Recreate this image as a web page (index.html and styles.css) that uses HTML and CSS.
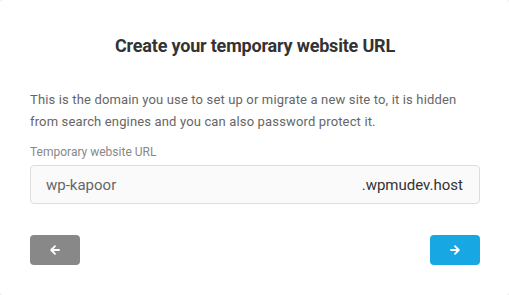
FILE: index.html
```html
<!DOCTYPE html>
<html>
<head>
<meta charset="utf-8">
<link rel="stylesheet" href="styles.css">
</head>
<body>
<div class="card">
  <h1 class="title">Create your temporary website URL</h1>
  <p class="desc">This is the domain you use to set up or migrate a new site to, it is hidden from search engines and you can also password protect it.</p>
  <label class="label">Temporary website URL</label>
  <div class="field">
    <span class="value">wp-kapoor</span>
    <span class="suffix">.wpmudev.host</span>
  </div>
  <div class="actions">
    <button class="btn btn-back" aria-label="Back">
      <svg width="12" height="12" viewBox="0 0 12 12"><path d="M10 6H2.5M6 2.2L2.2 6 6 9.8" fill="none" stroke="#fff" stroke-width="1.8" stroke-linecap="round" stroke-linejoin="round"/></svg>
    </button>
    <button class="btn btn-next" aria-label="Next">
      <svg width="12" height="12" viewBox="0 0 12 12"><path d="M2 6h7.5M6 2.2L9.8 6 6 9.8" fill="none" stroke="#fff" stroke-width="1.8" stroke-linecap="round" stroke-linejoin="round"/></svg>
    </button>
  </div>
</div>
</body>
</html>
```
FILE: styles.css
```css
html, body {
  margin: 0;
  padding: 0;
  background: #f0f0f0;
}
body {
  font-family: Roboto, "Liberation Sans", sans-serif;
}
.card {
  width: 509px;
  height: 295px;
  box-sizing: border-box;
  background: #fff;
  border-radius: 4px;
  padding: 34px 29px 0 30px;
}
.title {
  margin: 0;
  font-size: 18px;
  line-height: 24px;
  font-weight: 700;
  letter-spacing: -0.2px;
  color: #333;
  text-align: center;
}
.desc {
  margin: 31px 0 0;
  font-size: 13px;
  line-height: 22px;
  letter-spacing: 0.15px;
  color: #666;
}
.label {
  display: block;
  margin-top: 11px;
  font-size: 12px;
  line-height: 16px;
  color: #888;
}
.field {
  margin-top: 5px;
  height: 39px;
  box-sizing: border-box;
  border: 1px solid #ddd;
  border-radius: 4px;
  background: #fafafa;
  display: flex;
  align-items: center;
  justify-content: space-between;
  padding: 0 16px 0 15px;
  font-size: 15px;
}
.value {
  color: #666;
}
.suffix {
  color: #333;
}
.actions {
  margin-top: 31px;
  display: flex;
  justify-content: space-between;
}
.btn {
  width: 50px;
  height: 30px;
  border: none;
  border-radius: 4px;
  padding: 0;
  display: flex;
  align-items: center;
  justify-content: center;
}
.btn-back {
  background: #888;
}
.btn-next {
  background: #17a8e3;
}
```
